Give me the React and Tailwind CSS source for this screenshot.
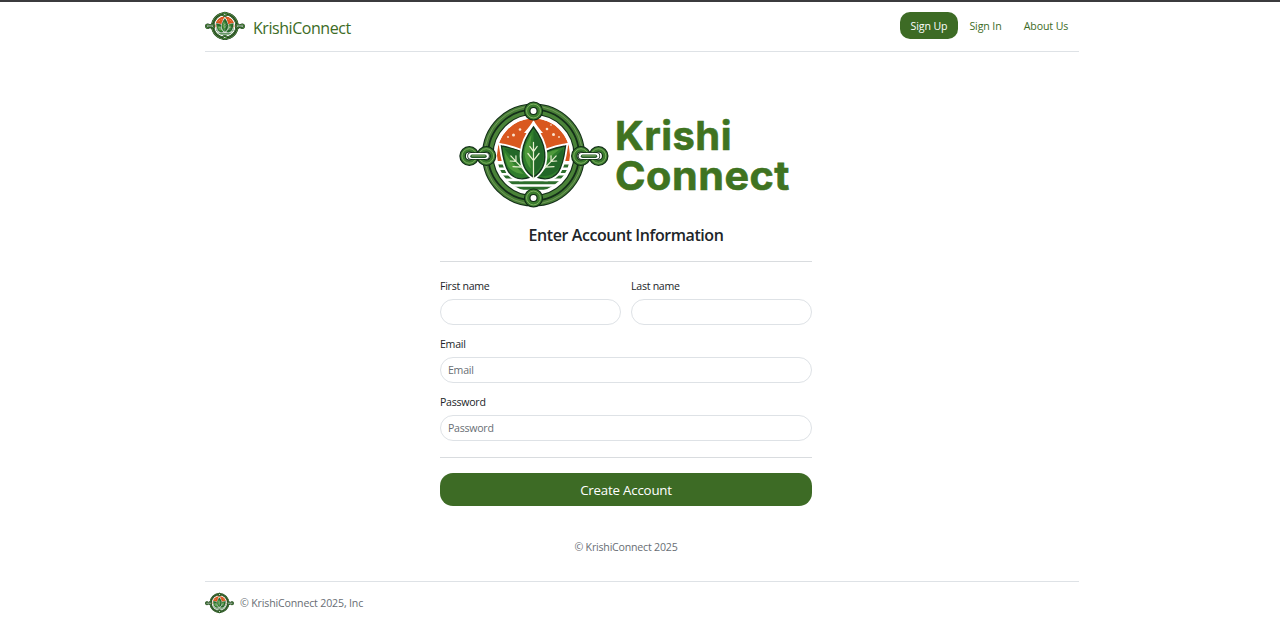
const leaf = "M0 0 C-9 -5 -13 -14 -12 -24 C-11 -34 -5 -43 0 -49 C5 -43 11 -34 12 -24 C13 -14 9 -5 0 0Z";
const sideLeaf = "M0 0 C-9 -4 -14 -12 -13 -22 C-11 -33 -5 -42 0 -50 C5 -42 11 -33 13 -22 C14 -12 9 -4 0 0Z";

function Ring({ cx, cy, r }) {
  return (
    <g fill="none">
      <circle cx={cx} cy={cy} r={r} stroke="#102a16" strokeWidth="6.6" fill="#fff" />
      <circle cx={cx} cy={cy} r={r} stroke="#3b7c2e" strokeWidth="4.4" />
      <circle cx={cx} cy={cy} r={r + 0.6} stroke="#86b466" strokeWidth="0.9" />
    </g>
  );
}

function Link({ x1, x2 }) {
  return (
    <g strokeLinecap="round">
      <path d={`M${x1} 55H${x2}`} stroke="#102a16" strokeWidth="7.4" />
      <path d={`M${x1} 55H${x2}`} stroke="#fff" strokeWidth="5.8" />
      <path d={`M${x1 + 1} 55.2H${x2 - 1}`} stroke="#24592a" strokeWidth="3.4" />
      <path d={`M${x1 + 1} 54.8H${x2 - 1}`} stroke="#7cab60" strokeWidth="1.2" />
    </g>
  );
}

function Leaf({ transform, shape = leaf }) {
  return (
    <g transform={transform}>
      <path d={shape} fill="#12351a" stroke="#fff" strokeWidth="5.4" />
      <path d={shape} fill="#2f7d2c" stroke="#12351a" strokeWidth="1.5" />
      <path d="M0 -2 C7 -7 11.500 -15 11 -24 C10 -33 5 -40 0 -46Z" fill="#226728" />
      <path d="M-3 -8 C-8 -14 -10 -20 -9.500 -27 C-8 -33 -5 -38 -2 -42 C-4 -32 -4 -20 -3 -8Z" fill="#4e9a3b" />
      <path d="M0 1V-34M0 -16L6 -23M0 -16L-6 -23M0 -25L4 -30M0 -25L-4 -30" fill="none" stroke="#e6efcf" strokeWidth="1.3" strokeLinecap="round" />
    </g>
  );
}

function Emblem({ className }) {
  return (
    <svg viewBox="0 0 150 108" className={className} aria-hidden="true">
      <circle cx="74.5" cy="54" r="43" fill="#fff" />
      <path d="M38.5 60A36.5 36.5 0 1 1 110.5 60Z" fill="#d9581f" />
      <path d="M39 65H110M40 70.500H109M43.500 76H105.500M48 81.800H101M55 87.200H94" stroke="#2c6e2c" strokeWidth="3" />
      <path d="M74.500 19Q77 24 84 32H65Q72 24 74.500 19Z" fill="#fff" />
      <g fill="#fbe3cf">
        <circle cx="61" cy="28.500" r="1.300" /><circle cx="54.500" cy="34" r="1.500" /><circle cx="49" cy="36" r="0.900" />
        <circle cx="88" cy="28" r="1.300" /><circle cx="94.500" cy="33.500" r="1.500" /><circle cx="100" cy="36" r="0.900" /><circle cx="92" cy="24" r="0.800" />
      </g>
      <g fill="none">
        <circle cx="74.500" cy="54" r="38.500" stroke="#fff" strokeWidth="4" />
        <circle cx="74.500" cy="54" r="45.700" stroke="#142f19" strokeWidth="11.600" />
        <circle cx="74.500" cy="54" r="48.400" stroke="#477d36" strokeWidth="4.100" />
        <circle cx="74.500" cy="54" r="42.800" stroke="#4a8338" strokeWidth="3.500" />
        <circle cx="74.500" cy="54" r="48.800" stroke="#7da363" strokeWidth="0.800" />
      </g>
      <Leaf shape={sideLeaf} transform="translate(71.500 76) rotate(-43) scale(.96 .85)" />
      <Leaf shape={sideLeaf} transform="translate(77.500 76) rotate(43) scale(.96 .85)" />
      <Leaf transform="translate(74.500 76) scale(.93 1.020)" />
      <Ring cx={74.5} cy={10} r={6.3} />
      <Ring cx={74.5} cy={97} r={6.3} />
      <Ring cx={10.3} cy={55} r={6.7} />
      <Ring cx={27.3} cy={55} r={6.7} />
      <Ring cx={122} cy={55} r={6.7} />
      <Ring cx={139.5} cy={55} r={6.7} />
      <Link x1={12} x2={27} />
      <Link x1={122.5} x2={137.5} />
    </svg>
  );
}

function Field({ label, placeholder = "", type = "text" }) {
  return (
    <label className="flex flex-1 flex-col">
      <span className="h-4 leading-4">{label}</span>
      <input
        type={type}
        placeholder={placeholder}
        className="mt-[5px] h-[26px] w-full rounded-[13px] border border-[#dee2e6] bg-white px-[7px] placeholder:text-[#686e74]"
      />
    </label>
  );
}

export default function App() {
  return (
    <div className="h-[635px] overflow-hidden border-t-2 border-[#3b3b3e] bg-white font-['Open_Sans','Noto_Sans',sans-serif] text-[10.600px] tracking-[-0.270px] text-[#212529]">
      <div className="ml-[205px] w-[874px]">
        <header className="flex h-[50px] items-start justify-between border-b border-[#dee2e6]">
          <a className="flex items-start pt-[9px] text-[#3d6b25]">
            <Emblem className="h-[30px] w-10" />
            <span className="ml-2 pt-px text-[16px] leading-[32px] tracking-[-0.450px]">KrishiConnect</span>
          </a>
          <nav className="flex pt-[10px] leading-[28px] tracking-[-0.100px] text-[#3d6b25]">
            <a className="h-[27px] w-[58px] rounded-[10px] bg-[#3d6b25] text-center text-white">Sign Up</a>
            <a className="w-[55px] text-center">Sign In</a>
            <a className="w-[66px] text-center">About Us</a>
          </nav>
        </header>

        <main className="ml-[235px] flex h-[529px] w-[372px] flex-col">
          <div className="mt-[49px] ml-[19px] flex">
            <Emblem className="h-[108px] w-[150px] shrink-0" />
            <svg viewBox="0 0 182 108" className="h-[108px] w-[182px] shrink-0 fill-[#3f7321] stroke-[#3f7321] stroke-[0.6px] font-['Inter',sans-serif] text-[39.500px] font-bold" role="img">
              <text x="6" y="49" letterSpacing="0.5" textLength="117" lengthAdjust="spacingAndGlyphs">Krishi</text>
              <text x="6" y="88.500" letterSpacing="0.5" textLength="175" lengthAdjust="spacingAndGlyphs">Connect</text>
            </svg>
          </div>
          <h1 className="mt-[14px] text-center text-[16px] leading-6 font-semibold tracking-[-0.430px]">Enter Account Information</h1>
          <div className="mt-[14px] border-t border-[#d9dcdf]" />
          <form className="flex flex-col">
            <div className="mt-4 flex gap-[10px]">
              <Field label="First name" />
              <Field label="Last name" />
            </div>
            <div className="mt-[11px] flex"><Field label="Email" placeholder="Email" /></div>
            <div className="mt-[11px] flex"><Field label="Password" placeholder="Password" type="password" /></div>
            <div className="mt-4 border-t border-[#d9dcdf]" />
            <button type="button" className="mt-[15px] h-[33px] rounded-[13px] bg-[#3d6b25] pt-[2px] text-[13.300px] tracking-[-0.200px] text-white">Create Account</button>
          </form>
          <p className="mt-[33px] text-center leading-4 tracking-[-0.200px] text-[#686e74]">© KrishiConnect 2025</p>
        </main>

        <footer className="flex h-[43px] items-center border-t border-[#dee2e6] tracking-[-0.160px] text-[#686e74]">
          <Emblem className="h-[22px] w-[29px]" />
          <span className="ml-1.5 pt-px">© KrishiConnect 2025, Inc</span>
        </footer>
      </div>
    </div>
  );
}
